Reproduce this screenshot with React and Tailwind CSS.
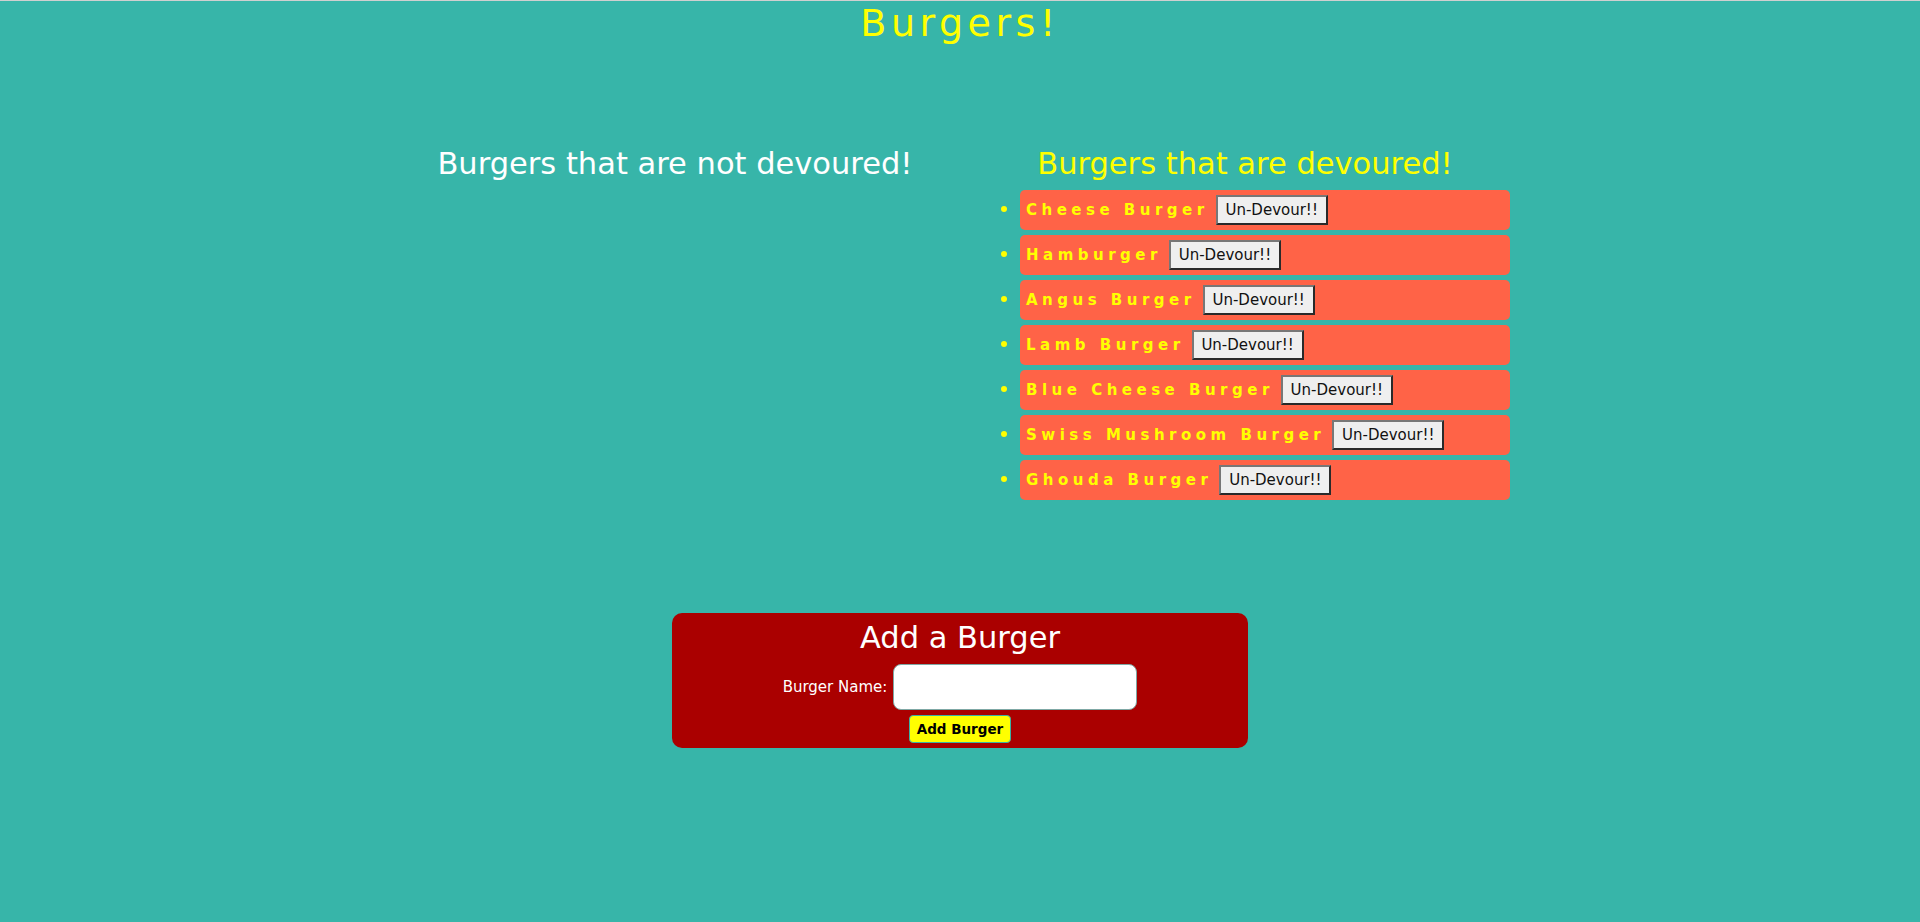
// App.jsx
// Burger list page: devoured / not devoured columns + add form

import React from 'react';

const devoured = [
  'Cheese Burger',
  'Hamburger',
  'Angus Burger',
  'Lamb Burger',
  'Blue Cheese Burger',
  'Swiss Mushroom Burger',
  'Ghouda Burger',
];

const BurgerItem = ({ name }) => (
  <li className="mb-[5px] text-[19px] text-[#ffff00] marker:text-[#ffff00]">
    <div className="h-[40px] flex items-center pl-[6px] rounded-[5px] bg-[#ff6347]">
      <span className="text-[15px] font-bold tracking-[4.5px] text-[#ffff00]">{name}</span>
      <button className="ml-[7px] w-[112px] h-[30px] inline-flex items-center justify-center bg-[#efefef] text-[15px] text-[#111] border-2 border-t-[#777] border-l-[#777] border-b-[#2a2a2a] border-r-[#2a2a2a]">
        Un-Devour!!
      </button>
    </div>
  </li>
);

const App = () => {
  return (
    <main className="min-h-[922px] w-full bg-[#37b5a9] border-t border-[#d0d0d0] font-['DejaVu_Sans',sans-serif]">
      <h1 className="text-center text-[38px] leading-[44px] tracking-[4.5px] text-[#ffff00]">Burgers!</h1>

      {/* Two columns */}
      <div className="mx-auto w-[1140px] flex mt-[101px]">
        <div className="w-[570px]">
          <h2 className="text-center text-[30.5px] leading-[35px] text-white">Burgers that are not devoured!</h2>
        </div>
        <div className="ml-[20px] w-[530px]">
          <h2 className="text-center text-[30.5px] leading-[35px] text-[#ffff00]">Burgers that are devoured!</h2>
          <ul className="list-disc pl-[40px] mt-[9px]">
            {devoured.map((b) => (
              <BurgerItem key={b} name={b} />
            ))}
          </ul>
        </div>
      </div>

      {/* Add form */}
      <div className="mx-auto mt-[108px] w-[576px] rounded-[10px] bg-[#aa0000] pt-[7px] pb-[5px] flex flex-col items-center">
        <h2 className="text-[30.5px] leading-[35px] text-white">Add a Burger</h2>
        <div className="mt-[9px] flex items-center gap-[6px]">
          <label className="text-[15px] text-white">Burger Name:</label>
          <input type="text" className="w-[244px] h-[46px] rounded-[8px] bg-white border border-[#7fa8a5] outline-none px-2" />
        </div>
        <button className="mt-[5px] h-[28px] px-[7px] rounded-[4px] bg-[#ffff00] border border-[#3ab0a4] text-[13.5px] font-bold text-black">
          Add Burger
        </button>
      </div>
    </main>
  );
};

export default App;
